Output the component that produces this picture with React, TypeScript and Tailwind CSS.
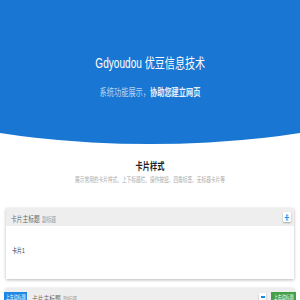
const font = "font-['Liberation_Sans','Noto_Sans_CJK_SC',sans-serif]";

function CollapseIcon() {
  return (
    <svg viewBox="0 0 8 10" className="w-[6px] h-[9px]" fill="none" stroke="#1e88e5" strokeWidth="1.2">
      <path d="M4 0.5v3M2.6 2.2L4 3.6l1.4-1.4" />
      <path d="M1 5h6" strokeWidth="1.4" />
      <path d="M4 9.5v-3M2.6 7.8L4 6.4l1.4 1.4" />
    </svg>
  );
}

function CardHead({ children }: { children: React.ReactNode }) {
  return (
    <div className="h-[18px] bg-[#eeeeee] flex items-center">{children}</div>
  );
}

function Title() {
  return (
    <span className="inline-block origin-left scale-x-[0.72] whitespace-nowrap">
      <span className="text-[8px] text-[#666]">卡片主标题</span>
      <span className="ml-[3px] text-[6.5px] text-[#999]">副标题</span>
    </span>
  );
}

export default function App() {
  return (
    <div className={`${font} bg-white min-h-[300px] overflow-hidden`}>
      {/* 顶部横幅 */}
      <div className="overflow-hidden">
        <div className="-mx-[150px] h-[144px] bg-[#1976d2] rounded-bl-[50%_82px] rounded-br-[50%_82px] flex flex-col items-center pt-[55px]">
          <h1 className="inline-block scale-x-[0.72] whitespace-nowrap text-[14px] leading-[16px] text-white">
            Gdyoudou 优豆信息技术
          </h1>
          <p className="mt-[16px] inline-block scale-x-[0.72] whitespace-nowrap text-[10px] leading-[12px]">
            <span className="text-white/70">系统功能展示，</span>
            <span className="text-white/90 font-bold">协助您建立网页</span>
          </p>
        </div>
      </div>

      {/* 卡片样式 */}
      <div className="flex flex-col items-center pt-[17px]">
        <h2 className="inline-block scale-x-[0.72] whitespace-nowrap text-[10px] leading-[12px] font-bold text-[#222]">
          卡片样式
        </h2>
        <p className="mt-[3px] inline-block scale-x-[0.72] whitespace-nowrap text-[6.5px] leading-[8px] text-[#aaa]">
          展示常用的卡片样式、上下标题栏、操作按钮、四角标签、无标题卡片等
        </p>
      </div>

      <div className="px-[6px] pt-[24px] flex flex-col gap-[9px]">
        <div className="bg-white shadow-[0_1px_3px_rgba(0,0,0,0.28)]">
          <CardHead>
            <div className="pl-[5px] flex-1">
              <Title />
            </div>
            <button className="mr-[3px] w-[8px] h-[10px] bg-white rounded-[1px] shadow-[0_1px_2px_rgba(0,0,0,0.3)] flex items-center justify-center">
              <CollapseIcon />
            </button>
          </CardHead>
          <div className="h-[53px] pl-[6px] pt-[10px]">
            <span className="inline-block origin-left scale-x-[0.72] text-[7px] leading-[9px] text-[#333]">
              卡片1
            </span>
          </div>
        </div>

        <div className="bg-white shadow-[0_1px_3px_rgba(0,0,0,0.28)]">
          <CardHead>
            <span className="-ml-[2px] w-[23px] h-[10px] bg-[#1e88e5] flex items-center justify-center overflow-hidden">
              <span className="inline-block scale-x-[0.72] whitespace-nowrap text-[5.5px] text-white">上左边标题</span>
            </span>
            <div className="pl-[5px] flex-1">
              <Title />
            </div>
            <button className="w-[7px] h-[8px] bg-white rounded-[1px] shadow-[0_1px_2px_rgba(0,0,0,0.3)] flex items-center justify-center">
              <span className="w-[4px] h-[1.2px] bg-[#1e88e5]" />
            </button>
            <span className="ml-[5px] -mr-[2px] w-[25px] h-[10px] bg-[#43a047] flex items-center justify-center overflow-hidden">
              <span className="inline-block scale-x-[0.72] whitespace-nowrap text-[5.5px] text-white">上右边标题</span>
            </span>
          </CardHead>
          <div className="h-[53px] pl-[6px] pt-[10px]">
            <span className="inline-block origin-left scale-x-[0.72] text-[7px] leading-[9px] text-[#333]">
              卡片2
            </span>
          </div>
        </div>
      </div>
    </div>
  );
}
